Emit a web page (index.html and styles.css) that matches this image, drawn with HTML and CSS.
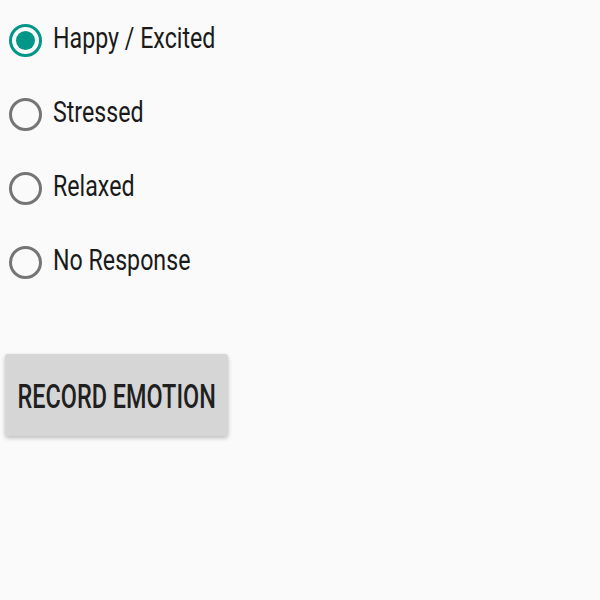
FILE: index.html
```html
<!DOCTYPE html>
<html>
<head>
<meta charset="utf-8">
<link rel="stylesheet" href="styles.css">
</head>
<body>
<div class="page">
  <div class="group">
    <label class="option"><span class="radio checked"><span class="dot"></span></span><span class="label">Happy / Excited</span></label>
    <label class="option"><span class="radio"></span><span class="label">Stressed</span></label>
    <label class="option"><span class="radio"></span><span class="label">Relaxed</span></label>
    <label class="option"><span class="radio"></span><span class="label">No Response</span></label>
  </div>
  <button class="btn"><span class="btn-text">RECORD EMOTION</span></button>
</div>
</body>
</html>
```
FILE: styles.css
```css
html, body { margin: 0; padding: 0; }
body { background: #fafafa; font-family: Roboto, "Liberation Sans", sans-serif; width: 600px; height: 600px; overflow: hidden; }
.page { display: flex; flex-direction: column; align-items: flex-start; padding: 3px 0 0 9px; }
.group { display: flex; flex-direction: column; }
.option { display: flex; align-items: center; height: 74px; gap: 11px; }
.radio { box-sizing: border-box; width: 33px; height: 33px; border: 3.5px solid #757575; border-radius: 50%; display: flex; align-items: center; justify-content: center; }
.radio.checked { border-color: #009688; }
.dot { width: 19px; height: 19px; border-radius: 50%; background: #009688; }
.label { font-size: 29px; line-height: 34px; color: #1a1a1a; transform: scaleX(0.80); transform-origin: left center; margin-top: -4px; white-space: nowrap; }
.btn { margin: 55px 0 0 -4px; width: 223px; height: 82px; border: none; border-radius: 3px; background: #d6d6d6; box-shadow: 0 2px 4px rgba(0,0,0,0.25); font-family: Roboto, sans-serif; font-weight: 500; font-size: 33px; color: #1f1f1f; padding: 0; white-space: nowrap; display: flex; align-items: center; justify-content: center; overflow: visible; }
.btn-text { display: inline-block; transform: scaleX(0.71); margin-top: 3px; }
```
